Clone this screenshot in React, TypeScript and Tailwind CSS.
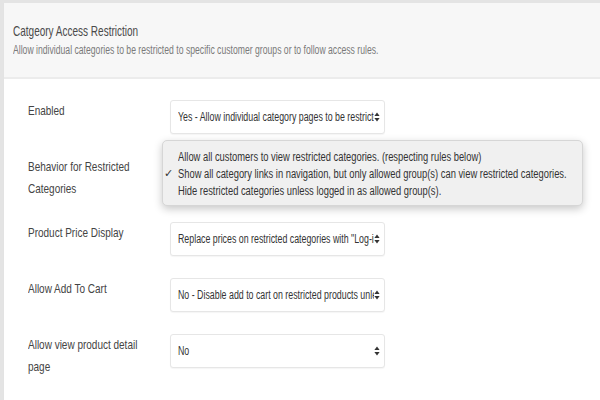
import React from 'react';

const font = "font-['Liberation_Sans',Arial,sans-serif]";

// little up/down arrows like the mac select
const SelectArrows = () => (
  <svg width="6" height="10" viewBox="0 0 6 10" className="shrink-0">
    <path d="M3 0.5 L5.6 4 L0.4 4 Z" fill="#333" />
    <path d="M3 9.5 L5.6 6 L0.4 6 Z" fill="#333" />
  </svg>
);

// the screenshot text is squeezed sideways, so squeeze ours the same way
const FakeSelect = ({ value }: { value: string }) => (
  <div className="flex h-[34px] w-[215px] shrink-0 items-center rounded-[3px] border border-[#e6e6e6] bg-white pl-[7px] pr-[4px] shadow-[0_1px_1px_rgba(0,0,0,0.04)]">
    <div className="flex-1 overflow-hidden">
      <div className="w-[136%] origin-left scale-x-[0.735] overflow-hidden whitespace-nowrap text-[12px] text-[#333]">
        {value}
      </div>
    </div>
    <SelectArrows />
  </div>
);

const Row = ({ label, value, children }: any) => (
  <div className="relative flex items-start">
    <div className="w-[142px] shrink-0 text-[13.5px] leading-[22px] text-[#444]">
      <span className="inline-block origin-left scale-x-[0.74] whitespace-nowrap">{label}</span>
    </div>
    <FakeSelect value={value} />
    {children}
  </div>
);

const options = [
  'Allow all customers to view restricted categories. (respecting rules below)',
  'Show all category links in navigation, but only allowed group(s) can view restricted categories.',
  'Hide restricted categories unless logged in as allowed group(s).',
];

const App = () => {
  const selected = 1;

  return (
    <div className={`h-[400px] w-[600px] overflow-hidden bg-[#e4e4e4] pt-[3px] ${font}`}>
      <div className="ml-[3px] h-full border-l border-[#e3e3e3] bg-white">
        {/* header */}
        <div className="h-[76px] border-b-[2px] border-[#ececec] bg-[#f7f7f7] px-[9px] pt-[19px]">
          <h1 className="text-[14.5px] leading-[18px] text-[#4a4a4a]">
            <span className="inline-block origin-left scale-x-[0.69] whitespace-nowrap">Catgeory Access Restriction</span>
          </h1>
          <p className="mt-[2px] text-[12px] leading-[16px] text-[#7a7a7a]">
            <span className="inline-block origin-left scale-x-[0.72] whitespace-nowrap">
              Allow individual categories to be restricted to specific customer groups or to follow access rules.
            </span>
          </p>
        </div>

        {/* settings */}
        <div className="flex flex-col gap-[22px] pl-[24px] pt-[21px]">
          <Row label="Enabled" value="Yes - Allow individual category pages to be restricted" />
          <Row
            label={<>Behavior for Restricted<br />Categories</>}
            value="Show all category links in navigation, but only allowed group(s) can view restricted categories."
          >
            {/* open menu */}
            <div className="absolute left-[134px] top-[-16px] h-[66px] w-[421px] rounded-[5px] border border-[#d6d6d6] bg-[#f0f0f0] py-[7px] shadow-[0_3px_8px_rgba(0,0,0,0.22)]">
              {options.map((opt, i) => (
                <div key={i} className="flex h-[17px] items-center text-[12px] text-[#333]">
                  <span className="w-[15px] shrink-0 pl-[1px] text-[11px]">{i === selected ? '✓' : ''}</span>
                  <span className="inline-block origin-left scale-x-[0.78] whitespace-nowrap">{opt}</span>
                </div>
              ))}
            </div>
          </Row>
          <Row label="Product Price Display" value={'Replace prices on restricted categories with "Log-in to see prices"'} />
          <Row label="Allow Add To Cart" value="No - Disable add to cart on restricted products unless logged in" />
          <Row label={<>Allow view product detail<br />page</>} value="No" />
        </div>
      </div>
    </div>
  );
};

export default App;
